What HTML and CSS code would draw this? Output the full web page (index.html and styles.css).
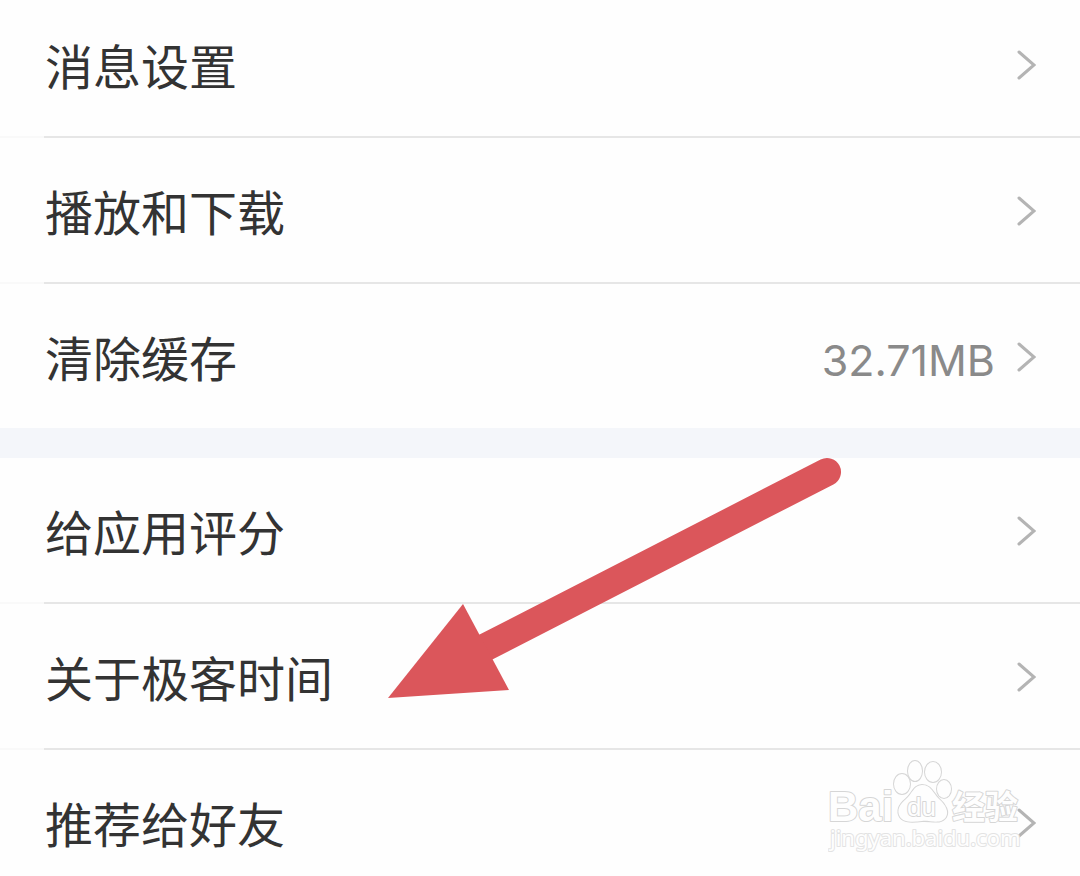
FILE: index.html
```html
<!DOCTYPE html>
<html lang="zh-CN">
<head>
  <meta charset="UTF-8" />
  <meta name="viewport" content="width=device-width, initial-scale=1.0" />
  <title>设置</title>
  <link rel="stylesheet" href="styles.css">
</head>
<body>
  <main class="settings">
    <nav class="group">
      <a class="row" href="#message">
        <span class="label">消息设置</span>
        <svg class="chevron" viewBox="0 0 20 32"><path d="M3 3 L18 16 L3 29" /></svg>
      </a>
      <a class="row" href="#download">
        <span class="label">播放和下载</span>
        <svg class="chevron" viewBox="0 0 20 32"><path d="M3 3 L18 16 L3 29" /></svg>
      </a>
      <a class="row" href="#cache">
        <span class="label">清除缓存</span>
        <span class="value">32.71MB</span>
        <svg class="chevron" viewBox="0 0 20 32"><path d="M3 3 L18 16 L3 29" /></svg>
      </a>
    </nav>
    <nav class="group">
      <a class="row" href="#rate">
        <span class="label">给应用评分</span>
        <svg class="chevron" viewBox="0 0 20 32"><path d="M3 3 L18 16 L3 29" /></svg>
      </a>
      <a class="row" href="#about">
        <span class="label">关于极客时间</span>
        <svg class="chevron" viewBox="0 0 20 32"><path d="M3 3 L18 16 L3 29" /></svg>
      </a>
      <a class="row" href="#share">
        <span class="label">推荐给好友</span>
        <svg class="chevron" viewBox="0 0 20 32"><path d="M3 3 L18 16 L3 29" /></svg>
      </a>
    </nav>

    <!-- arrow pointing at the "about" row -->
    <svg class="arrow" viewBox="0 0 456 244">
      <path class="arrow-shaft" d="M96 191 L439 15" />
      <path class="arrow-head" d="M0 241 L75 147 L121 233 Z" />
    </svg>

    <svg class="watermark" viewBox="0 0 200 96">
      <text class="brand" x="0" y="61">Bai</text>
      <g class="paw">
        <ellipse cx="74" cy="24" rx="8" ry="10" />
        <ellipse cx="87" cy="11" rx="7" ry="10" />
        <ellipse cx="105" cy="12" rx="8" ry="10" />
        <ellipse cx="116" cy="29" rx="7" ry="9" />
        <path d="M94 25 C103 25 105 33 111 39 C118 45 121 52 118 57 C113 65 102 60 94 61 C86 62 76 63 72 57 C68 50 72 44 78 39 C84 34 86 25 94 25 Z" />
      </g>
      <text class="brand-du" x="79" y="56">du</text>
      <text class="brand-cn" x="124" y="59">经验</text>
      <text class="site" x="2" y="86">jingyan.baidu.com</text>
    </svg>
  </main>
</body>
</html>
```
FILE: styles.css
```css
body {
  margin: 0;
  background: #fefefe;
  color: #333;
  font-family: Inter, "Noto Sans CJK SC", sans-serif;
}
.settings {
  position: relative;
  overflow: hidden;
}
.group + .group {
  border-top: 30px solid #f4f6fa;
}
.row {
  display: flex;
  align-items: center;
  padding: 36px 44px 36px 45px;
  color: inherit;
  text-decoration: none;
}
.row:not(:last-child) {
  border-bottom: 2px solid;
  border-image: linear-gradient(to right, #f9f9f9 45px, #e6e6e6 45px) 1;
}
.group:first-child .row:first-child {
  padding-top: 28px;
}
.group:last-of-type .row:last-child {
  padding-bottom: 18px;
}
.label {
  flex: 1;
  font-family: "Noto Sans CJK SC", sans-serif;
  font-size: 48px;
  line-height: 72px;
}
.value {
  margin-right: 21px;
  padding-top: 8px;
  color: #8a8a8a;
  font-size: 43px;
  line-height: 64px;
}
.chevron {
  width: 20px;
  height: 32px;
  margin-top: 2px;
  fill: none;
  stroke: #b4b4b4;
  stroke-width: 3;
  stroke-linecap: round;
}
.arrow {
  position: absolute;
  top: 457px;
  left: 388px;
  width: 456px;
  height: 244px;
}
.arrow-shaft {
  stroke: #db565b;
  stroke-width: 28;
  stroke-linecap: round;
}
.arrow-head {
  fill: #db565b;
}
.watermark {
  position: absolute;
  right: 52px;
  bottom: 20px;
  width: 200px;
  height: 96px;
  fill: #fefefe;
  stroke: #d6d6d6;
  stroke-width: 2;
  stroke-linejoin: round;
  paint-order: stroke;
}
.brand {
  font-family: "Liberation Sans", Arial, sans-serif;
  font-size: 42px;
  font-weight: bold;
}
.brand-du {
  font-family: "Liberation Sans", Arial, sans-serif;
  font-size: 26px;
}
.brand-cn {
  font-family: "Noto Sans CJK SC", sans-serif;
  font-size: 33px;
  font-weight: bold;
}
.site {
  font-family: "Noto Sans", sans-serif;
  font-size: 22px;
  stroke: #e3e3e3;
}
```
